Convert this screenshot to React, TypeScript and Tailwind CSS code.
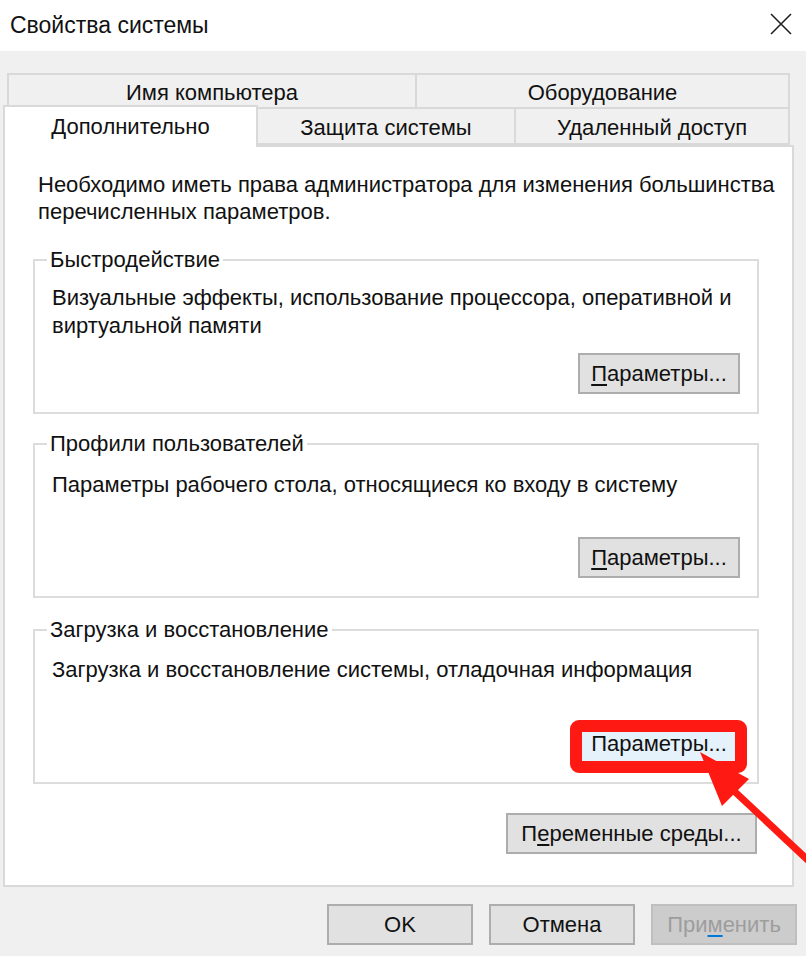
import React from "react";

const FONT = "font-['Liberation_Sans',Arial,sans-serif]";

function Btn({
  children,
  className = "",
  focused = false,
  disabled = false,
}: {
  children: React.ReactNode;
  className?: string;
  focused?: boolean;
  disabled?: boolean;
}) {
  const tone = disabled
    ? "border-[#bfbfbf] bg-[#cccccc] text-[#9d9d9d]"
    : focused
    ? "border-[#0078d7] bg-[#e5f1fb] text-[#111]"
    : "border-[#adadad] bg-[#e1e1e1] text-[#111]";
  return (
    <div
      className={`flex h-[41px] items-center justify-center border-2 text-[22px] leading-none ${tone} ${className}`}
    >
      {children}
    </div>
  );
}

function Group({
  title,
  lines,
  focused = false,
  textTop = "mt-[11px]",
}: {
  title: string;
  lines: string[];
  focused?: boolean;
  textTop?: string;
}) {
  return (
    <fieldset className="ml-[28px] h-[167px] w-[726px] border-2 border-[#dcdcdc] px-0 pb-[18px]">
      <legend className="ml-[12px] px-[3px] text-[22px] leading-[26px] text-[#111]">
        {title}
      </legend>
      <div className="flex h-full flex-col px-[17px]">
        <div className={`${textTop} text-[22px] leading-[28px] text-[#111]`}>
          {lines.map((l) => (
            <div key={l}>{l}</div>
          ))}
        </div>
        <div className="mt-auto flex justify-end">
          <Btn focused={focused} className="w-[162px]">
            <span>
              <span className={focused ? "" : "underline underline-offset-[3px]"}>П</span>
              араметры...
            </span>
          </Btn>
        </div>
      </div>
    </fieldset>
  );
}

export default function App() {
  return (
    <div className={`relative flex h-[956px] w-[806px] flex-col overflow-hidden bg-[#f0f0f0] ${FONT}`}>
      {/* title bar */}
      <div className="flex h-[51px] shrink-0 items-center justify-between bg-white pl-[10px] pr-[14px]">
        <span className="text-[23px] text-[#111]">Свойства системы</span>
        <svg width="22" height="22" viewBox="0 0 22 22" className="-mt-[3px]">
          <path d="M1 1 L21 21 M21 1 L1 21" stroke="#222" strokeWidth="1.6" fill="none" />
        </svg>
      </div>

      {/* tabs */}
      <div className="mt-[22px] flex flex-col pl-[7px]">
        <div className="flex h-[36px] w-[783px]">
          <div className="flex w-[408px] items-center justify-center border-2 border-r-0 border-[#d9d9d9] pt-[2px] text-[22px] text-[#111]">
            Имя компьютера
          </div>
          <div className="flex flex-1 items-center justify-center border-2 border-[#d9d9d9] pt-[2px] text-[22px] text-[#111]">
            Оборудование
          </div>
        </div>
        <div className="flex h-[36px] w-[783px]">
          <div className="relative z-10 -mt-[4px] -ml-[4px] mb-[-2px] flex h-[42px] w-[255px] items-center justify-center border-2 border-b-0 border-[#d9d9d9] bg-white pb-[2px] text-[22px] text-[#111]">
            Дополнительно
          </div>
          <div className="flex w-[258px] items-center justify-center border-2 border-t-0 border-l-0 border-[#d9d9d9] pt-[2px] text-[22px] text-[#111]">
            Защита системы
          </div>
          <div className="flex flex-1 items-center justify-center border-2 border-t-0 border-l-0 border-[#d9d9d9] pt-[2px] text-[22px] text-[#111]">
            Удаленный доступ
          </div>
        </div>
      </div>

      {/* panel */}
      <div className="ml-[3px] flex h-[742px] w-[791px] flex-col border-2 border-[#d9d9d9] bg-white">
        <div className="mt-[24px] pl-[33px] text-[22px] leading-[27px] text-[#111]">
          <div>Необходимо иметь права администратора для изменения большинства</div>
          <div>перечисленных параметров.</div>
        </div>

        <div className="mt-[22px]">
          <Group
            title="Быстродействие"
            lines={[
              "Визуальные эффекты, использование процессора, оперативной и",
              "виртуальной памяти",
            ]}
          />
        </div>
        <div className="mt-[17px]">
          <Group
            title="Профили пользователей"
            lines={["Параметры рабочего стола, относящиеся ко входу в систему"]}
            textTop="mt-[14px]"
          />
        </div>
        <div className="mt-[19px]">
          <Group
            title="Загрузка и восстановление"
            lines={["Загрузка и восстановление системы, отладочная информация"]}
            textTop="mt-[13px]"
            focused
          />
        </div>

        <div className="mt-[29px] flex justify-end pr-[35px]">
          <Btn className="w-[251px]">
            <span>
              П<span className="underline underline-offset-[3px]">е</span>ременные среды...
            </span>
          </Btn>
        </div>
      </div>

      {/* dialog buttons */}
      <div className="mt-[17px] flex justify-end gap-[16px] pr-[9px]">
        <Btn className="w-[146px]">OK</Btn>
        <Btn className="w-[146px]">Отмена</Btn>
        <Btn disabled className="w-[146px]">
          <span>
            При<span className="underline decoration-[#0078d7] underline-offset-[3px]">м</span>енить
          </span>
        </Btn>
      </div>

      {/* annotation overlay */}
      <svg className="pointer-events-none absolute inset-0" width="806" height="956" viewBox="0 0 806 956">
        <rect x="576" y="726" width="165" height="41" rx="3" fill="none" stroke="#fe1a12" strokeWidth="12" />
        <polygon points="700,752 722,806 749,779" fill="#fe1a12" />
        <line x1="733" y1="790" x2="812" y2="864" stroke="#fe1a12" strokeWidth="7" />
      </svg>
    </div>
  );
}
